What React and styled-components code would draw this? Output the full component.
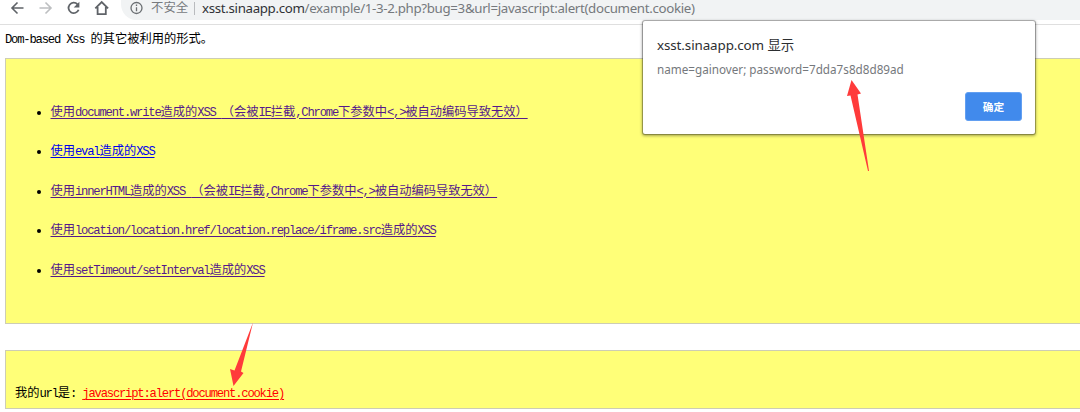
import React from 'react';
import styled, { createGlobalStyle } from 'styled-components';

const GlobalStyle = createGlobalStyle`
  * { box-sizing: border-box; }
  body { margin: 0; background: #fff; overflow: hidden; }
`;

const ui = '"Noto Sans", "Noto Sans CJK SC", sans-serif';

const Browser = styled.div`
  position: relative;
  width: 1080px;
  height: 412px;
  overflow: hidden;
  background: #fff;
`;

const Toolbar = styled.header`
  display: flex;
  align-items: flex-start;
  height: 25px;
  border-bottom: 1px solid #dfdfdf;
`;

const NavIcons = styled.svg`
  flex: none;
  width: 121px;
  height: 20px;
`;

const AddressBar = styled.div`
  flex: 1;
  display: flex;
  align-items: center;
  height: 20px;
  padding: 0 0 4px 9px;
  background: #f1f3f4;
  border-bottom-left-radius: 15px 16px;
  font: 13.3px/16px ${ui};
  color: #80868b;
  white-space: nowrap;
`;

const InfoIcon = styled.svg`
  flex: none;
  width: 13px;
  height: 16px;
`;

const Security = styled.span`
  width: 38px;
  margin-left: 8px;
  font-size: 12.4px;
  color: #777a7e;
`;

const Divider = styled.span`
  width: 1px;
  height: 13px;
  margin: 0 7px 0 5px;
  background: #b9bbbe;
`;

const Url = styled.span`
  letter-spacing: ${(p) => p.$tracking}px;
  color: #75797d;
`;

const Host = styled.span`
  color: #303236;
`;

const Page = styled.main`
  display: flex;
  flex-direction: column;
  padding-left: 5px;
  font: 12.24px/16px "Noto Sans CJK SC", sans-serif;
  color: #000;
  white-space: nowrap;
`;

const Intro = styled.p`
  height: 33px;
  margin: 0;
  padding-top: 5px;
`;

const Panel = styled.section`
  display: flex;
  flex-direction: column;
  height: ${(p) => p.$height}px;
  margin-bottom: 26px;
  padding: ${(p) => p.$pad};
  border: 1px solid #cdcdb4;
  border-right: 0;
  background: #ffff78;
`;

const Links = styled.ul`
  display: flex;
  flex-direction: column;
  gap: 23.5px;
  margin: 0;
  padding: 0;
  list-style: none;
`;

const Item = styled.li`
  display: flex;
  align-items: center;
  height: 16px;
`;

const Bullet = styled.span`
  width: 4px;
  height: 4px;
  margin: 2px 9.5px 0 0;
  border-radius: 50%;
  background: #000;
`;

const Anchor = styled.a`
  color: ${(p) => p.$color};
  text-decoration: underline;
  text-decoration-thickness: 1px;
  text-underline-offset: 2px;
`;

const Latin = styled.span`
  font: 12.2px/16px "Liberation Mono", monospace;
  letter-spacing: -1.2px;
`;

const Dialog = styled.div`
  position: absolute;
  left: 643px;
  top: 21px;
  width: 392px;
  height: 113px;
  display: flex;
  flex-direction: column;
  padding: 14px 13px 13px 14px;
  border-radius: 2px;
  background: #fff;
  box-shadow: 0 0 0 1px rgba(0, 0, 0, 0.24), 0 1px 3px 1px rgba(0, 0, 0, 0.35);
  font-family: ${ui};
  white-space: nowrap;
`;

const Title = styled.div`
  height: 24px;
  font-size: 13.4px;
  letter-spacing: -0.1px;
  line-height: 20px;
  color: #2c2e31;
`;

const Message = styled.div`
  font-size: 11.7px;
  line-height: 20px;
  color: #75787c;
`;

const OkButton = styled.button`
  align-self: flex-end;
  width: 57px;
  height: 29px;
  margin-top: auto;
  padding: 0;
  border: 1px solid #629ff1;
  border-radius: 3px;
  background: #418aec;
  color: #fff;
  font: bold 10.7px/27px "Noto Sans CJK SC", sans-serif;
`;

const Arrows = styled.svg`
  position: absolute;
  inset: 0;
  pointer-events: none;
`;

function Mixed({ children }) {
  return children
    .split(/([\x20-\x7e]+)/)
    .filter(Boolean)
    .map((run, i) => (/^[\x20-\x7e]/.test(run) ? <Latin key={i}>{run}</Latin> : run));
}

const links = [
  { text: '使用document.write造成的XSS （会被IE拦截,Chrome下参数中<,>被自动编码导致无效）', color: '#551a8b' },
  { text: '使用eval造成的XSS', color: '#0000ee' },
  { text: '使用innerHTML造成的XSS （会被IE拦截,Chrome下参数中<,>被自动编码导致无效）', color: '#551a8b' },
  { text: '使用location/location.href/location.replace/iframe.src造成的XSS', color: '#551a8b' },
  { text: '使用setTimeout/setInterval造成的XSS', color: '#551a8b' },
];

export default function App() {
  return (
    <Browser>
      <GlobalStyle />
      <Toolbar>
        <NavIcons viewBox="0 0 121 20" fill="none" stroke="#5f6368" strokeWidth="1.6">
          <path d="M23.5 8H12.5M17.5 2.5L12 8l5.500 5.500" />
          <path d="M39.500 8h11M45.500 2.500L51 8l-5.500 5.500" stroke="#bdbfc1" />
          <path d="M77.500 4.300A5.200 5.200 0 1 0 78.600 9.700" strokeWidth="1.800" />
          <path d="M79.400 1.800V7.500H73.700Z" fill="#5f6368" stroke="none" />
          <path d="M95.300 8.300L101.700 2l6.400 6.300M97.600 7v7.200h8.200V7" strokeWidth="1.800" />
        </NavIcons>
        <AddressBar>
          <InfoIcon viewBox="0 0 13 16" fill="none" stroke="#6b6f73" strokeWidth="1.300">
            <circle cx="6.500" cy="8" r="5.500" />
            <path d="M6.500 7.200v4M6.500 4.600v1.400" />
          </InfoIcon>
          <Security>不安全</Security>
          <Divider />
          <Url $tracking={-0.33}>
            <Host>xsst.sinaapp.com</Host>/example/1-3-2.php?bug=3&amp;url=javascript:alert(document.cookie)
          </Url>
        </AddressBar>
      </Toolbar>
      <Page>
        <Intro><Mixed>Dom-based Xss 的其它被利用的形式。</Mixed></Intro>
        <Panel $height={266} $pad="44.5px 0 0 31px">
          <Links>
            {links.map((l) => (
              <Item key={l.text}>
                <Bullet />
                <Anchor $color={l.color}><Mixed>{l.text}</Mixed></Anchor>
              </Item>
            ))}
          </Links>
        </Panel>
        <Panel $height={59} $pad="33px 0 0 9px">
          <div>
            <Mixed>我的url是: </Mixed>
            <Anchor $color="#f00"><Mixed>javascript:alert(document.cookie)</Mixed></Anchor>
          </div>
        </Panel>
      </Page>
      <Dialog role="dialog">
        <Title>xsst.sinaapp.com 显示</Title>
        <Message>name=gainover; password=7dda7s8d8d89ad</Message>
        <OkButton>确定</OkButton>
      </Dialog>
      <Arrows width="1080" height="412" fill="#ff3b3b">
        <path d="M851.500 80L861 93.500 857.500 94.500 869 171 868 171 850.500 95.500 847 96Z" />
        <path d="M253 322.500L241 371.500 243.500 373 233.500 386 230 369 234.500 370.500Z" />
      </Arrows>
    </Browser>
  );
}
